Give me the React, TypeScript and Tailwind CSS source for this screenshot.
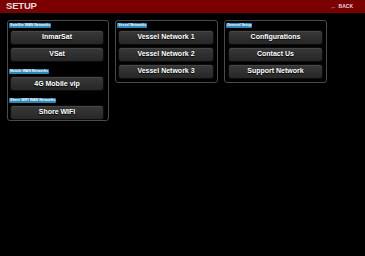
import React from "react";

const Btn = ({ children }: { children: React.ReactNode }) => (
  <div className="h-[15px] rounded-[3px] border border-[#0c0c0c] bg-gradient-to-b from-[#393939] to-[#272727] shadow-[inset_0_1px_0_rgba(255,255,255,0.08)] flex items-center justify-center text-[7px] font-bold text-white [text-shadow:0_1px_1px_#000]">
    {children}
  </div>
);

const Label = ({ children }: { children: React.ReactNode }) => (
  <div className="self-start h-[5px] px-[1px] bg-[#2f87b8] rounded-[1px] text-[3.6px] leading-[5px] font-bold text-white whitespace-nowrap">
    {children}
  </div>
);

export default function App() {
  return (
    <div className="w-[365px] h-[256px] bg-black font-['Liberation_Sans',Arial,sans-serif] overflow-hidden">
      <div className="h-[13px] bg-[#7b0000] flex items-center justify-between pl-[6px] pr-[12px]">
        <span className="text-[9.5px] font-bold text-[#e6dcdc] tracking-[-0.2px]">SETUP</span>
        <span className="text-[5px] font-bold text-[#e6dcdc] flex items-center gap-[2px]">
          <span className="text-[6px] leading-none">←</span>BACK
        </span>
      </div>
      <div className="flex items-start gap-[6px] pl-[7px] pt-[7px]">
        <div className="w-[102px] h-[101px] rounded-[3px] border border-[#4a4a4a] flex flex-col gap-[2px] pl-[1px] pr-[4px] pt-[2px]">
          <Label>Satellite WAN Networks</Label>
          <div className="flex flex-col gap-[2px] pl-[1px]">
            <Btn>InmarSat</Btn>
            <Btn>VSat</Btn>
          </div>
          <div className="h-[4px]" />
          <Label>Mobile WAN Networks</Label>
          <div className="pl-[1px]">
            <Btn>4G Mobile vip</Btn>
          </div>
          <div className="h-[3px]" />
          <Label>Shore WIFI WAN Networks</Label>
          <div className="pl-[1px]">
            <Btn>Shore WIFI</Btn>
          </div>
        </div>
        <div className="w-[103px] h-[63px] rounded-[3px] border border-[#4a4a4a] flex flex-col gap-[2px] pl-[1px] pr-[3px] pt-[2px]">
          <Label>Vessel Networks</Label>
          <div className="flex flex-col gap-[2px] pl-[1px]">
            <Btn>Vessel Network 1</Btn>
            <Btn>Vessel Network 2</Btn>
            <Btn>Vessel Network 3</Btn>
          </div>
        </div>
        <div className="w-[103px] h-[63px] rounded-[3px] border border-[#4a4a4a] flex flex-col gap-[2px] pl-[1px] pr-[3px] pt-[2px]">
          <Label>General Setup</Label>
          <div className="flex flex-col gap-[2px] pl-[2px]">
            <Btn>Configurations</Btn>
            <Btn>Contact Us</Btn>
            <Btn>Support Network</Btn>
          </div>
        </div>
      </div>
    </div>
  );
}
